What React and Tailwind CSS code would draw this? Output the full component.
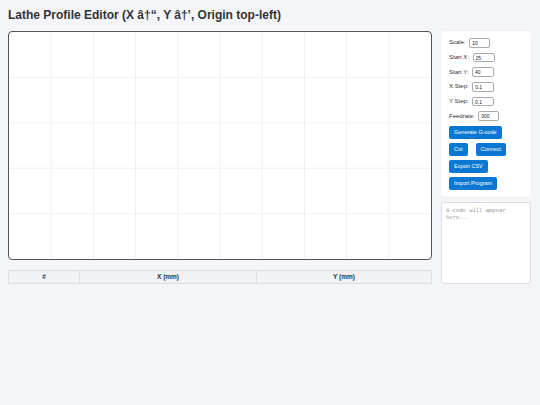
import { useState } from "react";

const fields = [
  { label: "Scale:", value: "10", width: "w-[21px]" },
  { label: "Start X:", value: "25", width: "w-[22px]" },
  { label: "Start Y:", value: "40", width: "w-[22px]" },
  { label: "X Step:", value: "0.1", width: "w-[22px]" },
  { label: "Y Step:", value: "0.1", width: "w-[22px]" },
  { label: "Feedrate:", value: "300", width: "w-[21px]" }
];

const Button = ({ children }) => (
  <button
    type="button"
    className="h-[13px] rounded-[2px] bg-[#0a78d2] px-[5px] text-[5.5px] leading-[13px] text-white"
  >
    {children}
  </button>
);

const GridCanvas = () => {
  const cols = [1, 2, 3, 4, 5, 6, 7, 8, 9];
  const rows = [1, 2, 3, 4];
  return (
    <svg className="block h-full w-full" xmlns="http://www.w3.org/2000/svg">
      {cols.map((c) => (
        <line key={`c${c}`} x1={`${c * 10}%`} x2={`${c * 10}%`} y1="0" y2="100%" stroke="#f0f0f0" strokeWidth="1" />
      ))}
      {rows.map((r) => (
        <line key={`r${r}`} x1="0" x2="100%" y1={`${r * 20}%`} y2={`${r * 20}%`} stroke="#f0f0f0" strokeWidth="1" />
      ))}
    </svg>
  );
};

const App = () => {
  const [values, setValues] = useState(fields.map((f) => f.value));
  const [gcode, setGcode] = useState("");

  return (
    <div className="min-h-screen bg-[#f4f5f9] px-2 font-['Liberation_Sans',Arial,sans-serif] text-[#333]">
      <h1 className="h-[31px] pt-[8px] text-[12px] font-bold leading-[14px] text-[#333]">
        Lathe Profile Editor (X â†“, Y â†’, Origin top-left)
      </h1>

      <div className="flex gap-[9px]">
        <div className="w-[424px]">
          <div className="h-[229px] overflow-hidden rounded-[4px] border border-[#555] bg-white">
            <GridCanvas />
          </div>

          <table className="mt-[10px] w-full border-collapse text-[6.5px]">
            <thead className="bg-[#f1f2f5]">
              <tr>
                <th className="h-[13px] w-[71px] border border-[#dcdde2] p-0 font-bold">#</th>
                <th className="h-[13px] w-[177px] border border-[#dcdde2] p-0 font-bold">X (mm)</th>
                <th className="h-[13px] border border-[#dcdde2] p-0 font-bold">Y (mm)</th>
              </tr>
            </thead>
            <tbody />
          </table>
        </div>

        <div className="w-[90px]">
          <div className="rounded-[4px] bg-white px-[8px] pb-[7px] pt-[7px] shadow-[0_0_2px_rgba(0,0,0,0.06)]">
            <div className="flex flex-col gap-[5px]">
              {fields.map((f, i) => (
                <div key={f.label} className="flex h-[9.7px] items-center gap-[3.5px] text-[6px]">
                  <span>{f.label}</span>
                  <input
                    value={values[i]}
                    onChange={(e) => setValues((prev) => prev.map((v, j) => (j === i ? e.target.value : v)))}
                    className={`${f.width} h-[9.7px] rounded-[2px] border border-[#aaa] bg-white px-[2px] text-[5px] leading-none text-[#222] outline-none`}
                  />
                </div>
              ))}
            </div>

            <div className="mt-[5px] flex flex-col items-start gap-[4px]">
              <Button>Generate G-code</Button>
              <div className="flex gap-[8px]">
                <Button>Cut</Button>
                <Button>Connect</Button>
              </div>
              <Button>Export CSV</Button>
              <Button>Import Program</Button>
            </div>
          </div>

          <textarea
            value={gcode}
            onChange={(e) => setGcode(e.target.value)}
            placeholder="G-code will appear here..."
            className="mt-[5px] block h-[82px] w-full resize-none rounded-[3px] border border-[#dcdde2] bg-white px-[4px] py-[4px] font-['DejaVu_Sans_Mono',monospace] text-[5.5px] leading-[7px] text-[#333] outline-none placeholder:text-[#999]"
          />
        </div>
      </div>
    </div>
  );
};

export default App;
